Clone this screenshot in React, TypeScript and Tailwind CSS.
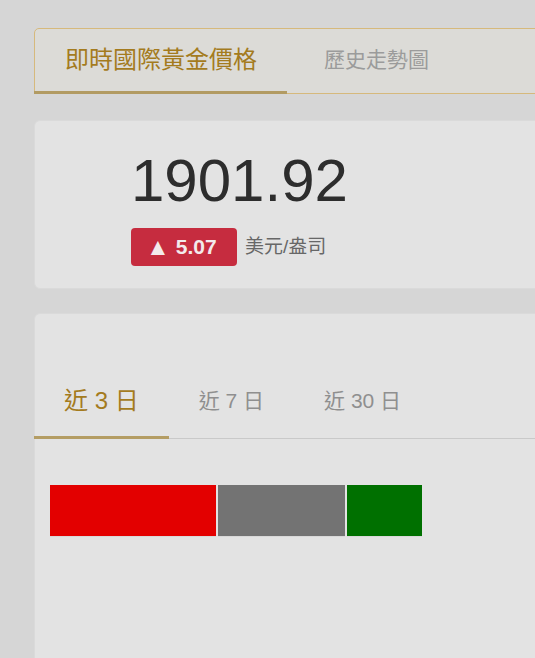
import React, { useState } from "react";

const FONT = '"Liberation Sans", Arial, "Noto Sans CJK TC", sans-serif';

const RANGES = ["近 3 日", "近 7 日", "近 30 日"];

const BARS = [
  { color: "bg-[#e30000]", width: 166 },
  { color: "bg-[#737373]", width: 127 },
  { color: "bg-[#007000]", width: 75 },
];

export default function App() {
  const [topTab, setTopTab] = useState<number>(0);
  const [range, setRange] = useState<number>(0);

  return (
    <div
      className="min-h-screen h-[658px] overflow-hidden bg-[#d6d6d6] pl-[34px] pt-[28px]"
      style={{ fontFamily: FONT }}
    >
      <div className="w-[560px] flex flex-col">
        {/* top tabs */}
        <div className="flex flex-row h-[66px] bg-[#dcdbd7] border border-[#d6b97c] rounded-tl-[5px] rounded-bl-[3px]">
          {["即時國際黃金價格", "歷史走勢圖"].map((label, index) => (
            <div
              key={index}
              onClick={() => setTopTab(index)}
              className={`${
                topTab === index
                  ? "text-[#a47b1e] text-[24px] border-[#b29b63] w-[253px] -ml-px pl-[31px]"
                  : "text-[#9b9b9b] text-[21px] border-transparent pl-[37px]"
              } cursor-pointer flex items-center border-b-[3px] -mb-px`}
            >
              {label}
            </div>
          ))}
        </div>

        {/* price card */}
        <div className="mt-[26px] h-[169px] bg-[#e3e3e3] rounded-[6px] border border-[#dadada] pl-[96px] pt-[30px]">
          <p className="text-[60px] leading-[60px] text-[#2d2d2d]">1901.92</p>
          <div className="flex flex-row items-center gap-2 mt-[17px]">
            <div className="h-[38px] w-[106px] rounded-[4px] bg-[#c62c3f] text-[#f3eaec] font-bold text-[21px] flex items-center pl-[15px]">
              <span className="text-[24px] leading-none mr-[6px]">▲</span>
              5.07
            </div>
            <span className="text-[19px] text-[#676767]">美元/盎司</span>
          </div>
        </div>

        {/* chart card */}
        <div className="mt-[24px] h-[400px] bg-[#e3e3e3] rounded-[6px] border border-[#dadada] pt-[52px]">
          <div className="flex flex-row border-b border-[#c9c9c9]">
            {RANGES.map((label, index) => (
              <div
                key={index}
                onClick={() => setRange(index)}
                className={`${
                  range === index
                    ? "text-[#a47b1e] text-[24px] border-[#b49d64] -ml-px"
                    : "text-[#8f8f8f] text-[21px] border-transparent"
                } cursor-pointer px-[30px] h-[73px] flex items-center border-b-[3px] -mb-px`}
              >
                {label}
              </div>
            ))}
          </div>
          <div className="flex flex-row gap-[2px] pl-[15px] pt-[46px]">
            {BARS.map((bar, index) => (
              <div
                key={index}
                className={`${bar.color} h-[52px] border-b border-[#d8d8d8]`}
                style={{ width: bar.width }}
              />
            ))}
          </div>
        </div>
      </div>
    </div>
  );
}
